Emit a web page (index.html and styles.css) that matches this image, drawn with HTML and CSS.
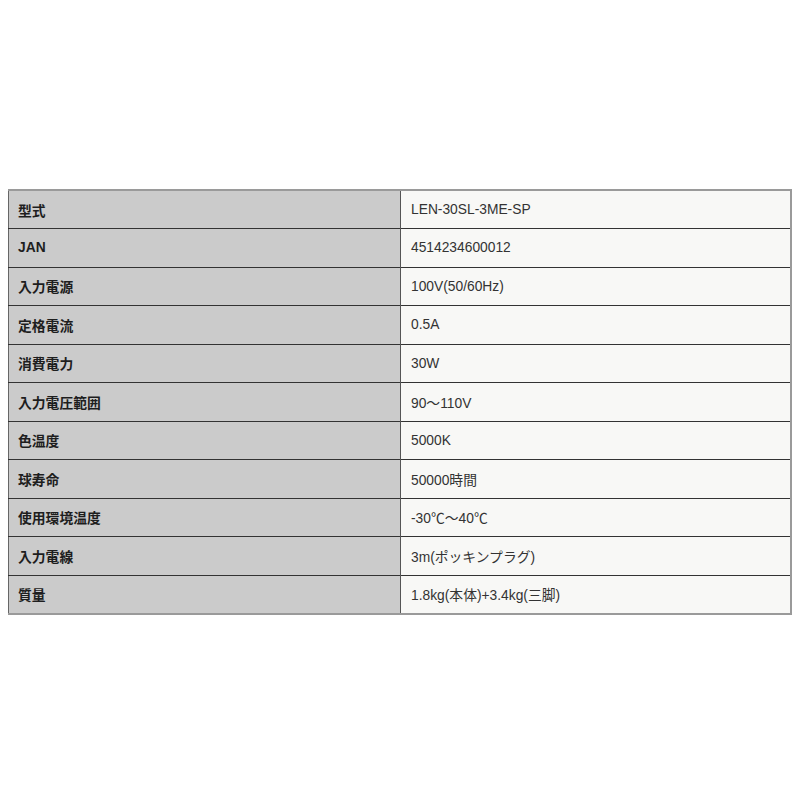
FILE: index.html
```html
<!DOCTYPE html>
<html lang="ja">
<head>
<meta charset="utf-8">
<link rel="stylesheet" href="styles.css">
</head>
<body>
<div class="wrap">
<table class="spec">
<tr><th>型式</th><td>LEN-30SL-3ME-SP</td></tr>
<tr><th>JAN</th><td>4514234600012</td></tr>
<tr><th>入力電源</th><td>100V(50/60Hz)</td></tr>
<tr><th>定格電流</th><td>0.5A</td></tr>
<tr><th>消費電力</th><td>30W</td></tr>
<tr><th>入力電圧範囲</th><td>90～110V</td></tr>
<tr><th>色温度</th><td>5000K</td></tr>
<tr><th>球寿命</th><td>50000時間</td></tr>
<tr><th>使用環境温度</th><td>-30℃～40℃</td></tr>
<tr><th>入力電線</th><td>3m(ポッキンプラグ)</td></tr>
<tr><th>質量</th><td>1.8kg(本体)+3.4kg(三脚)</td></tr>
</table>
</div>
</body>
</html>
```
FILE: styles.css
```css
html, body {
  margin: 0;
  padding: 0;
  background: #ffffff;
}
.wrap {
  padding: 189px 8px 0 8px;
}
.spec {
  width: 784px;
  border-collapse: collapse;
  border: 2px solid #9a9a9a;
  border-left: 1px solid #666;
  font-family: "Liberation Sans", Arial, "Noto Sans CJK JP", sans-serif;
  font-size: 13.8px;
}
.spec tr {
  height: 38.5px;
}
.spec th, .spec td {
  border-top: 1px solid #333;
  padding: 0 0 0 9px;
  text-align: left;
  vertical-align: middle;
}
.spec tr:first-child th, .spec tr:first-child td {
  border-top: none;
}
.spec th {
  width: 382px;
  background: #cbcbcb;
  color: #1e1e1e;
  font-weight: bold;
  border-right: 1px solid #555;
}
.spec td {
  background: #f8f8f6;
  color: #333;
  font-weight: normal;
  padding-left: 10px;
}
```
